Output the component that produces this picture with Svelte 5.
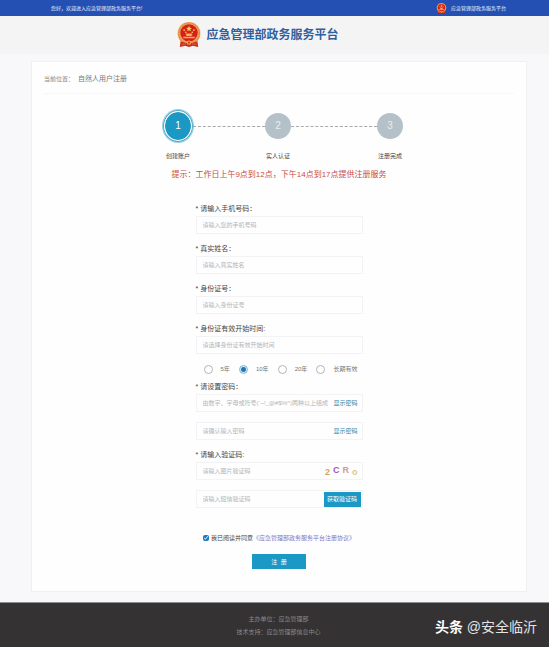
<script>
  let period = $state("10年");
  let agreed = $state(true);
  let showPassword = $state(false);
  let showConfirm = $state(false);

  const steps = [
    { no: 1, label: "创建账户", grow: 0 },
    { no: 2, label: "实人认证", grow: 71 },
    { no: 3, label: "注册完成", grow: 85 }
  ];

  const fields = [
    { id: "phone", label: "请输入手机号码：", placeholder: "请输入您的手机号码" },
    { id: "name", label: "真实姓名：", placeholder: "请输入真实姓名" },
    { id: "idcard", label: "身份证号：", placeholder: "请输入身份证号" },
    { id: "start", label: "身份证有效开始时间:", placeholder: "请选择身份证有效开始时间" }
  ];

  const periods = ["5年", "10年", "20年", "长期有效"];
</script>

{#snippet emblem()}
  <svg class="emblem" viewBox="0 0 48 48" aria-hidden="true">
    <path d="M9 32 L7 46 L17 44 L24 46 L31 44 L41 46 L39 32 Z" fill="#c92a1c" />
    <circle cx="24" cy="21" r="21" fill="#e9a25a" />
    <circle cx="24" cy="21" r="19" fill="none" stroke="#d9652e" stroke-width="1" stroke-dasharray="3 2" />
    <circle cx="24" cy="20" r="16" fill="#d81f17" />
    <path d="M24 7l1.5 3.6 3.9.3-3 2.5 1 3.8-3.4-2-3.4 2 1-3.8-3-2.5 3.9-.3z" fill="#f8d36a" />
    <circle cx="15" cy="15" r="1.5" fill="#f8d36a" />
    <circle cx="18" cy="19" r="1.5" fill="#f8d36a" />
    <circle cx="30" cy="19" r="1.5" fill="#f8d36a" />
    <circle cx="33" cy="15" r="1.5" fill="#f8d36a" />
    <path d="M17 23l2-2h10l2 2zM19 23h10v3H19zM13 27h22l-1 3H14z" fill="#efb45a" />
    <path d="M10 36q14 6 28 0l1 8-8-2-7 2-7-2-8 2z" fill="#cf2d1d" />
    <circle cx="24" cy="38" r="4" fill="#efb45a" />
    <circle cx="24" cy="38" r="2" fill="#c92a1c" />
    <path d="M10 41q7 1 9-2M38 41q-7 1-9-2" fill="none" stroke="#e98a4a" stroke-width="1" />
  </svg>
{/snippet}

<div class="page">
  <div class="topbar">
    <span>您好，欢迎进入应急管理部政务服务平台!</span>
    <a class="topbar__link" href="#home">{@render emblem()}应急管理部政务服务平台</a>
  </div>

  <header class="header">
    {@render emblem()}
    <h1>应急管理部政务服务平台</h1>
  </header>

  <main class="card">
    <nav class="crumbs">
      <span>当前位置：</span>
      <span class="crumbs__current">自然人用户注册</span>
    </nav>

    <ol class="steps">
      {#each steps as step}
        {#if step.no > 1}
          <li class="line" style="flex-grow: {step.grow}" aria-hidden="true"></li>
        {/if}
        <li class="step" class:active={step.no === 1}>
          <span class="step__no">{step.no}</span>
          <span class="step__label">{step.label}</span>
        </li>
      {/each}
    </ol>

    <p class="tip">提示：工作日上午9点到12点，下午14点到17点提供注册服务</p>

    <form class="form" onsubmit={(e) => e.preventDefault()}>
      {#each fields as field}
        <label class="label" for={field.id}>* {field.label}</label>
        <div class="box">
          <input id={field.id} type="text" placeholder={field.placeholder} />
        </div>
      {/each}

      <div class="radios" role="radiogroup" aria-label="有效期">
        {#each periods as item}
          <label>
            <input type="radio" name="period" value={item} bind:group={period} />
            {item}
          </label>
        {/each}
      </div>

      <label class="label" for="password">* 请设置密码：</label>
      <div class="box">
        <input
          id="password"
          type={showPassword ? "text" : "password"}
          placeholder="由数字、字母或符号(`~!_@#$%^)两种以上组成" />
        <button class="toggle" type="button" onclick={() => (showPassword = !showPassword)}>显示密码</button>
      </div>
      <div class="box">
        <input
          type={showConfirm ? "text" : "password"}
          aria-label="确认密码"
          placeholder="请确认输入密码" />
        <button class="toggle" type="button" onclick={() => (showConfirm = !showConfirm)}>显示密码</button>
      </div>

      <label class="label" for="captcha">* 请输入验证码:</label>
      <div class="box">
        <input id="captcha" type="text" placeholder="请输入图片验证码" />
        <div class="captcha">
          <span class="c1">2</span>
          <span class="c2">C</span>
          <span class="c3">R</span>
          <span class="c4">o</span>
        </div>
      </div>
      <div class="box">
        <input type="text" aria-label="短信验证码" placeholder="请输入短信验证码" />
        <button class="sms" type="button">获取验证码</button>
      </div>

      <div class="agree">
        <input id="agree" type="checkbox" bind:checked={agreed} />
        <label for="agree">我已阅读并同意</label>
        <a href="#terms">《应急管理部政务服务平台注册协议》</a>
      </div>

      <button class="submit" type="submit">注&nbsp; 册</button>
    </form>
  </main>

  <footer class="footer">
    <p>主办单位：应急管理部</p>
    <p>技术支持：应急管理部信息中心</p>
    <div class="watermark"><b>头条</b> @安全临沂</div>
  </footer>
</div>

<style>
  :global(body) {
    margin: 0;
    background: #f8f7fa;
  }
  .page {
    display: flex;
    flex-direction: column;
    min-height: 100vh;
    font-family: "Liberation Sans", "Noto Sans CJK SC", sans-serif;
    font-size: 6px;
    line-height: 10px;
    color: #555;
  }
  input,
  button {
    font-family: inherit;
    font-size: 6px;
    line-height: 10px;
    margin: 0;
    padding: 0;
    border: 0;
    box-sizing: border-box;
  }
  button {
    cursor: pointer;
  }
  a {
    text-decoration: none;
  }
  .topbar {
    display: flex;
    justify-content: space-between;
    align-items: center;
    height: 16px;
    padding: 0 43px 0 51px;
    background: #2450b3;
    color: #e8effc;
    font-size: 5px;
  }
  .topbar__link {
    display: flex;
    align-items: center;
    gap: 4px;
    color: #e8effc;
  }
  .topbar .emblem {
    width: 11px;
    height: 11px;
  }
  .header {
    display: flex;
    justify-content: center;
    align-items: center;
    gap: 4px;
    height: 38px;
    padding-right: 34px;
    background: #f5f4f4;
  }
  .header .emblem {
    width: 26px;
    height: 26px;
  }
  h1 {
    margin: 0;
    font-size: 12px;
    line-height: 16px;
    color: #30609c;
  }
  .card {
    margin: 7px 22px 10px 31px;
    padding: 12px 12px 22px;
    background: #fefefe;
    border: 1px solid #f0eff1;
    box-sizing: border-box;
  }
  .crumbs {
    display: flex;
    gap: 4px;
    padding-bottom: 9px;
    border-bottom: 1px solid #f7f7f8;
    color: #888;
  }
  .crumbs__current {
    color: #777;
    font-size: 7px;
  }
  .steps {
    display: flex;
    align-items: flex-start;
    width: 240px;
    margin: 16px auto 0;
    padding: 0 0 0 8px;
    list-style: none;
  }
  .step {
    display: flex;
    flex-direction: column;
    align-items: center;
    gap: 9px;
  }
  .step__no {
    width: 26px;
    margin: 3px 0;
    border-radius: 50%;
    background: #b5c1c8;
    color: #e6edf0;
    font-size: 10px;
    line-height: 26px;
    text-align: center;
  }
  .active .step__no {
    margin: 0;
    border: 2px solid #fff;
    outline: 1px solid #4fa9c6;
    outline-offset: -1px;
    box-shadow: 0 0 0 1px #9ccfe0;
    background: #1b98c4;
    background-clip: padding-box;
    padding: 1px 0;
    color: #fff;
  }
  .step__label {
    color: #444;
    white-space: nowrap;
  }
  .line {
    flex-basis: 0;
    margin-top: 16px;
    border-top: 1px dashed #a4a9ae;
  }
  .tip {
    margin: 8px 0 0;
    color: #c94a45;
    font-size: 8px;
    line-height: 12px;
    text-align: center;
  }
  .form {
    display: flex;
    flex-direction: column;
    width: 167px;
    margin: 23px auto 0;
  }
  .label {
    margin-bottom: 3px;
    color: #444;
    font-size: 7px;
    line-height: 9px;
  }
  .box {
    display: flex;
    align-items: center;
    height: 18px;
    margin-bottom: 10px;
    padding: 0 4px 0 6px;
    border: 1px solid #f3f3f5;
    box-sizing: border-box;
  }
  .box input {
    flex: 1;
    min-width: 0;
    height: 14px;
    background: transparent;
    color: #555;
    outline: none;
  }
  .box input::placeholder {
    color: #b4b4b8;
  }
  .toggle {
    margin-left: 2px;
    background: none;
    color: #3488a5;
  }
  .captcha {
    display: flex;
    gap: 3px;
    font-size: 9px;
    line-height: 12px;
    font-weight: bold;
  }
  .c1 {
    color: #cfa860;
    padding-top: 2px;
  }
  .c2 {
    color: #a556c4;
  }
  .c3 {
    color: #d0a08c;
  }
  .c4 {
    color: #d2cc90;
    padding-top: 2px;
  }
  .sms {
    width: 37px;
    height: 15px;
    margin-right: -3px;
    background: #1b98c4;
    color: #fff;
    white-space: nowrap;
  }
  .radios {
    display: flex;
    justify-content: space-between;
    margin-bottom: 8px;
    padding: 0 5px 0 8px;
    color: #777;
  }
  .radios label {
    display: flex;
    align-items: center;
    gap: 8px;
  }
  .radios input {
    appearance: none;
    width: 9px;
    height: 9px;
    border: 1px solid #b4b4b8;
    border-radius: 50%;
    background: #fff;
  }
  .radios input:checked {
    border-color: #7fb8dc;
    background: radial-gradient(#1f78b4 0 2px, #d3e9f5 3px);
  }
  .agree {
    display: flex;
    justify-content: center;
    align-items: center;
    margin-top: 15px;
    white-space: nowrap;
    color: #444;
  }
  .agree input {
    flex: none;
    width: 6px;
    height: 6px;
    margin-right: 2px;
    accent-color: #1f78c0;
  }
  .agree a {
    color: #7d78c4;
  }
  .submit {
    align-self: center;
    width: 54px;
    height: 15px;
    margin-top: 11px;
    background: #1b98c4;
    color: #fff;
  }
  .footer {
    position: relative;
    flex: 1;
    padding: 11px 0 9px 8px;
    border-top: 1px solid #8f8f90;
    background: #343233;
    color: #88888a;
    text-align: center;
  }
  .footer p {
    margin: 0 0 3px;
  }
  .watermark {
    position: absolute;
    right: 12px;
    top: 14px;
    color: #e4e4e4;
    font-size: 14px;
    line-height: 20px;
  }
  .watermark b {
    color: #fff;
  }
</style>
